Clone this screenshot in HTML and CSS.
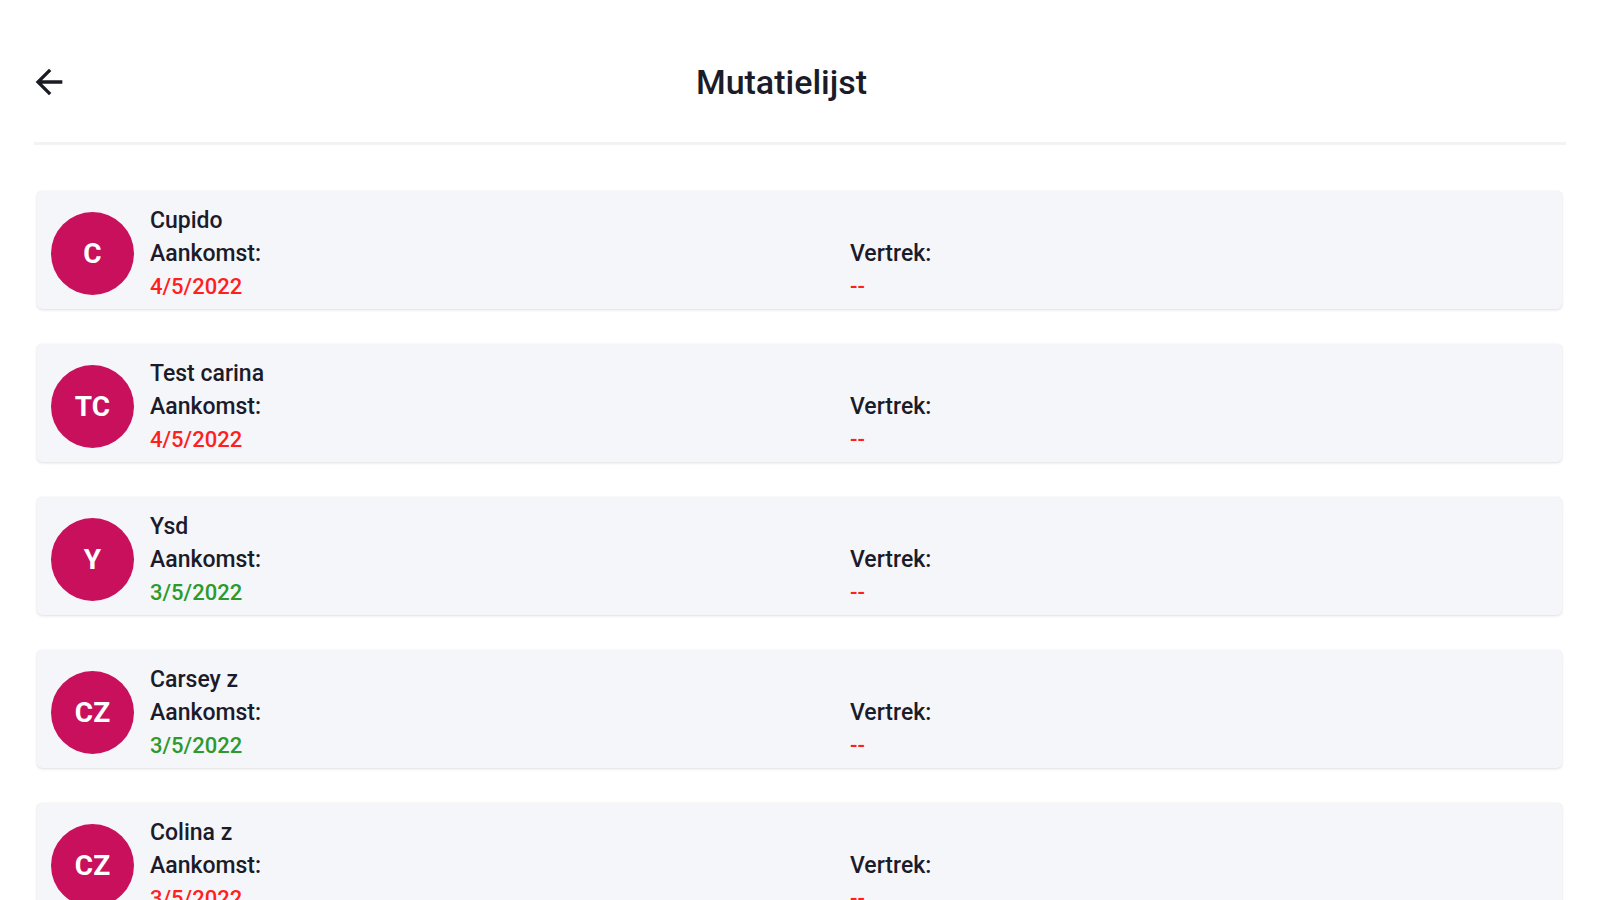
FILE: index.html
```html
<!DOCTYPE html>
<html lang="nl">
<head>
<meta charset="utf-8">
<title>Mutatielijst</title>
<link rel="stylesheet" href="styles.css">
</head>
<body>
<div class="page">
  <header class="header">
    <button class="back" aria-label="Terug">
      <svg viewBox="0 0 24 24" width="40" height="40"><path d="M20 11H7.83l5.59-5.59L12 4l-8 8 8 8 1.41-1.41L7.83 13H20v-2z" fill="#1b1b24"/></svg>
    </button>
    <h1 class="title">Mutatielijst</h1>
    <div class="spacer"></div>
  </header>
  <main class="list">
    <div class="card">
      <div class="avatar">C</div>
      <div class="info">
        <div class="name">Cupido</div>
        <div class="label">Aankomst:</div>
        <div class="label">Vertrek:</div>
        <div class="value red">4/5/2022</div>
        <div class="value red">--</div>
      </div>
    </div>
    <div class="card">
      <div class="avatar">TC</div>
      <div class="info">
        <div class="name">Test carina</div>
        <div class="label">Aankomst:</div>
        <div class="label">Vertrek:</div>
        <div class="value red">4/5/2022</div>
        <div class="value red">--</div>
      </div>
    </div>
    <div class="card">
      <div class="avatar">Y</div>
      <div class="info">
        <div class="name">Ysd</div>
        <div class="label">Aankomst:</div>
        <div class="label">Vertrek:</div>
        <div class="value green">3/5/2022</div>
        <div class="value red">--</div>
      </div>
    </div>
    <div class="card">
      <div class="avatar">CZ</div>
      <div class="info">
        <div class="name">Carsey z</div>
        <div class="label">Aankomst:</div>
        <div class="label">Vertrek:</div>
        <div class="value green">3/5/2022</div>
        <div class="value red">--</div>
      </div>
    </div>
    <div class="card">
      <div class="avatar">CZ</div>
      <div class="info">
        <div class="name">Colina z</div>
        <div class="label">Aankomst:</div>
        <div class="label">Vertrek:</div>
        <div class="value red">3/5/2022</div>
        <div class="value red">--</div>
      </div>
    </div>
  </main>
</div>
</body>
</html>
```
FILE: styles.css
```css
* { box-sizing: border-box; }
html, body {
  margin: 0;
  padding: 0;
  background: #ffffff;
  height: 100%;
  overflow: hidden;
}
body {
  font-family: Roboto, "Noto Sans", "Liberation Sans", sans-serif;
  color: #1b1b2a;
}
.page {
  padding: 0 34px;
}
.header {
  display: flex;
  align-items: center;
  height: 145px;
  padding-top: 22px;
  border-bottom: 3px solid #f3f3f5;
}
.back {
  border: none;
  background: none;
  padding: 0;
  margin-left: -5px;
  width: 40px;
  height: 40px;
  display: flex;
  align-items: center;
  justify-content: center;
  cursor: pointer;
}
.title {
  flex: 1;
  margin: 0;
  text-align: center;
  font-size: 34px;
  font-weight: 500;
  color: #1b1b2a;
}
.spacer {
  width: 72px;
}
.list {
  display: flex;
  flex-direction: column;
  gap: 35px;
  padding-top: 46px;
}
.card {
  display: flex;
  align-items: center;
  gap: 16px;
  height: 118px;
  margin: 0 4px 0 3px;
  padding: 6px 12px 0 14px;
  background: #f5f6fa;
  border-radius: 5px;
  box-shadow: 0 1px 3px rgba(0,0,0,0.12), 0 0 1px rgba(0,0,0,0.08);
}
.avatar {
  width: 83px;
  height: 83px;
  flex: none;
  border-radius: 50%;
  background: #c8105c;
  color: #ffffff;
  font-weight: 700;
  font-size: 28px;
  display: flex;
  align-items: center;
  justify-content: center;
}
.info {
  flex: 1;
  display: grid;
  grid-template-columns: 1fr 1fr;
  grid-auto-rows: 33px;
  align-items: center;
  font-size: 23px;
  font-weight: 500;
}
.name {
  grid-column: 1 / 3;
}
.value {
  font-size: 22px;
}
.value.red { color: #ff1f1f; }
.value.green { color: #2c9a2c; }
```
